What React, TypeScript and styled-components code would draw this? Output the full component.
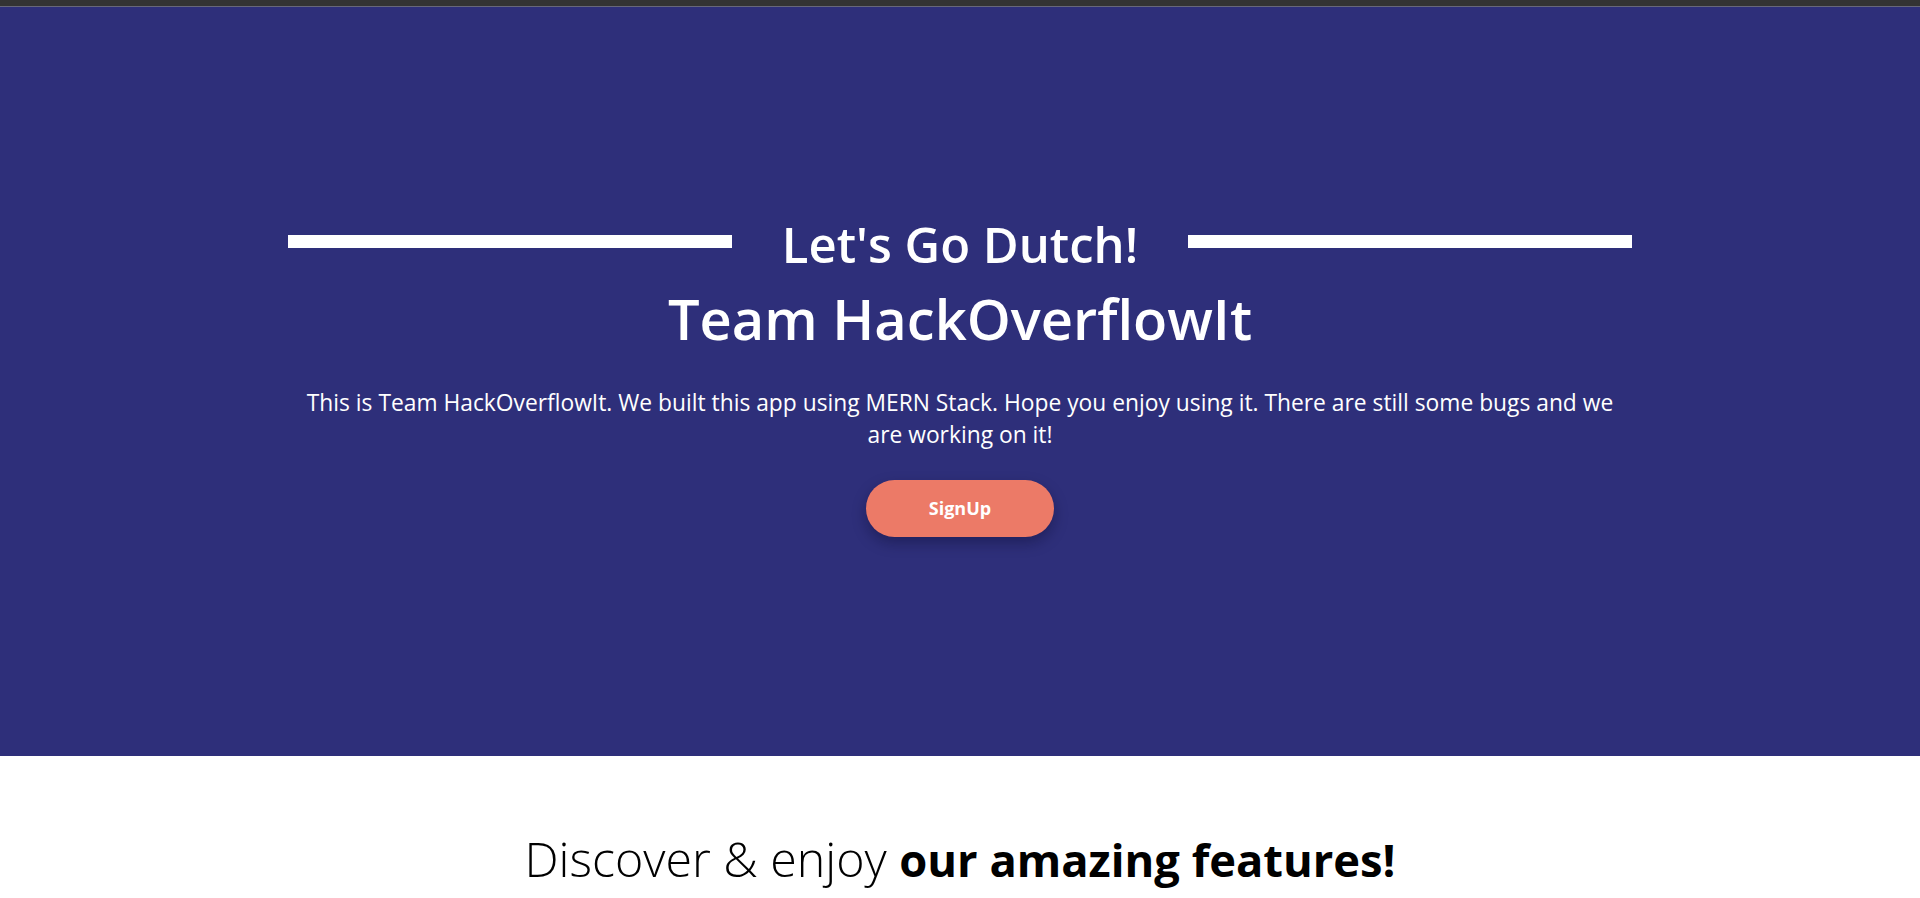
import React from "react";
import styled, { createGlobalStyle } from "styled-components";

const GlobalStyle = createGlobalStyle`
  html, body {
    margin: 0;
    padding: 0;
    background: #ffffff;
    overflow: hidden;
  }
  body {
    font-family: "Open Sans", "Noto Sans", "Liberation Sans", sans-serif;
  }
  * { box-sizing: border-box; }
`;

const TopBar = styled.div`
  height: 7px;
  background: #333333;
  border-bottom: 1px solid #676779;
`;

const Hero = styled.section`
  height: 749px;
  background: #2e2f7a;
  display: flex;
  flex-direction: column;
  align-items: center;
  padding-top: 207.6px;
`;

const Container = styled.div`
  width: 70%;
  display: flex;
  flex-direction: column;
  align-items: center;
`;

const TitleRow = styled.div`
  width: 100%;
  display: flex;
  align-items: center;
`;

const Rule = styled.span`
  flex: 1;
  height: 13px;
  background: #ffffff;
  margin-bottom: 5px;
`;

const Title = styled.h1`
  margin: 0;
  padding: 0 50px;
  color: #ffffff;
  font-size: 49px;
  font-weight: 600;
  line-height: 1.2;
  white-space: nowrap;
`;

const TeamName = styled.h2`
  margin: 11.3px 0 0;
  color: #ffffff;
  font-size: 56px;
  font-weight: 600;
  line-height: 1.2;
`;

const Intro = styled.p`
  margin: 35.5px 0 0;
  max-width: 1320px;
  color: #ffffff;
  font-size: 22.8px;
  line-height: 32px;
  text-align: center;
`;

const SignUpButton = styled.button`
  margin-top: 28.6px;
  width: 188px;
  height: 57px;
  border: none;
  border-radius: 29px;
  background: #ec7a67;
  color: #ffffff;
  font-family: inherit;
  font-size: 18px;
  font-weight: 700;
  cursor: pointer;
  box-shadow: 0 6px 14px rgba(10, 10, 40, 0.35);
`;

const Features = styled.section`
  height: 142px;
  display: flex;
  justify-content: center;
  padding-top: 74px;
`;

const FeaturesHeading = styled.h2`
  margin: 0;
  color: #000000;
  font-size: 48.3px;
  font-weight: 300;
  line-height: 1.2;
  white-space: nowrap;
`;

const Strong = styled.span`
  font-size: 45.3px;
  font-weight: 700;
`;

export default function App() {
  return (
    <>
      <GlobalStyle />
      <TopBar />
      <Hero>
        <Container>
          <TitleRow>
            <Rule />
            <Title>Let's Go Dutch!</Title>
            <Rule />
          </TitleRow>
          <TeamName>Team HackOverflowIt</TeamName>
          <Intro>
            This is Team HackOverflowIt. We built this app using MERN Stack. Hope you enjoy using it. There are still
            some bugs and we are working on it!
          </Intro>
          <SignUpButton>SignUp</SignUpButton>
        </Container>
      </Hero>
      <Features>
        <FeaturesHeading>
          Discover &amp; enjoy <Strong>our amazing features!</Strong>
        </FeaturesHeading>
      </Features>
    </>
  );
}
